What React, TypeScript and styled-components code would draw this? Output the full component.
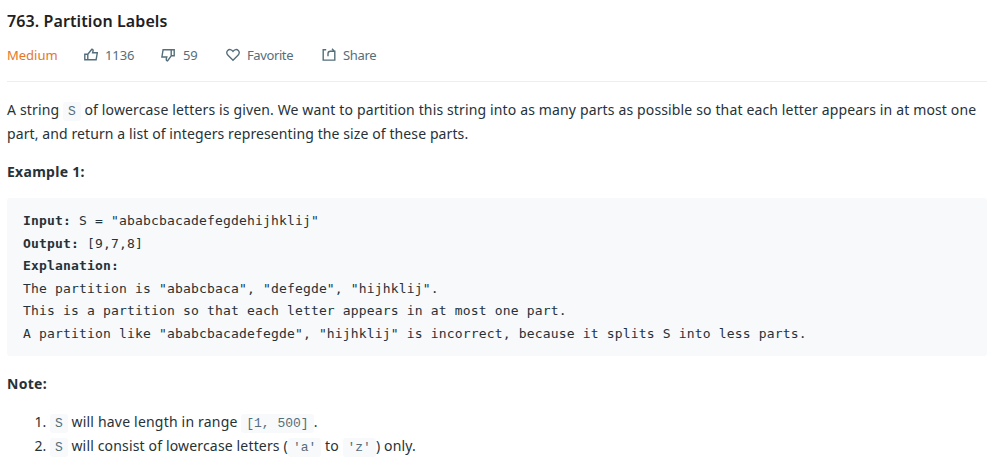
import React from "react";
import styled, { createGlobalStyle } from "styled-components";

const GlobalStyle = createGlobalStyle`
  body {
    margin: 0;
    background: #fff;
    color: #263238;
    font: 14px/24px "Noto Sans", "Open Sans", sans-serif;
    overflow: hidden;
  }
`;

const Page = styled.main`
  padding: 9px 7px 0;
`;

const Title = styled.h1`
  margin: 0;
  font-size: 16px;
  line-height: 24px;
  font-weight: 600;
  color: #212121;
`;

const Meta = styled.div`
  display: grid;
  grid-template-columns: 77px 77px 65px 96px auto;
  align-items: center;
  height: 24px;
  margin-top: 10px;
  padding-bottom: 14px;
  border-bottom: 1px solid #eeeeee;
  font-size: 13px;
  color: #546e7a;
`;

const Difficulty = styled.span`
  color: #e5762a;
`;

const Action = styled.span<{ $gap: number }>`
  display: flex;
  align-items: center;
  gap: ${(p) => p.$gap}px;

  svg {
    flex: none;
    width: 14px;
    height: 14px;
    fill: none;
    stroke: currentColor;
    stroke-width: 1.4;
  }
`;

const Run = styled.span<{ $track?: number }>`
  white-space: nowrap;
  letter-spacing: ${(p) => p.$track ?? 0}px;
`;

const Paragraph = styled.p<{ $top: number }>`
  margin: ${(p) => p.$top}px 0 0;
`;

const Code = styled.code`
  padding: 2px 5px;
  border-radius: 3px;
  background: #f7f9fa;
  color: #546e7a;
  font: 13px/16px "Liberation Mono", monospace;
`;

const Sample = styled.pre`
  box-sizing: border-box;
  height: 158px;
  margin: 14px 0 0;
  padding: 12px 16px 10px;
  border-radius: 3px;
  background: #f7f9fa;
  font: 13px/22.6px "DejaVu Sans Mono", monospace;
  letter-spacing: 0.17px;
`;

const Notes = styled.ol`
  margin: 14px 0 0;
  padding-left: 43px;
`;

const Item = styled.li`
  padding: 0;
`;

export default function App() {
  return (
    <>
      <GlobalStyle />
      <Page>
        <Title><Run $track={0.1}>763. Partition Labels</Run></Title>
        <Meta>
          <Difficulty><Run>Medium</Run></Difficulty>
          <Action $gap={7}>
            <svg viewBox="0 0 14 14">
              <path d="M.8 6.2h3v5.6h-3zM3.8 6.2 7.8 1.2c1.2.2 1.5 1 1.2 2L8.6 4.8h4.7l-1.2 7H3.8" />
            </svg>
            <Run $track={-0.1}>1136</Run>
          </Action>
          <Action $gap={8}>
            <svg viewBox="0 0 14 14">
              <path d="M13.2 1.7h-3v6.1h3zM10.2 7.8l-3.7 5.1c-1.1-.2-1.4-1-1.2-2L5.8 9H.9l1.2-7.3h8.1" />
            </svg>
            <Run $track={-0.2}>59</Run>
          </Action>
          <Action $gap={7}>
            <svg viewBox="0 0 14 14">
              <path d="M7 12.2 2 7.3C.4 5.7.4 3.6 1.7 2.4 3.2 1 5.6 1.4 7 3.4c1.4-2 3.8-2.4 5.3-1C13.6 3.6 13.6 5.7 12 7.3Z" />
            </svg>
            <Run $track={-0.4}>Favorite</Run>
          </Action>
          <Action $gap={7}>
            <svg viewBox="0 0 14 14">
              <path d="M4.2 1.7H1.2v10.4h11.6V3.2H8.4c-1.6 0-2.4.8-2.4 2.2v2.8M10 .8l2.4 2.4" />
            </svg>
            <Run $track={-0.3}>Share</Run>
          </Action>
        </Meta>

        <Paragraph $top={16}>
          <Run $track={0.15}>A string </Run> <Code>S</Code>{" "}
          <Run $track={0.142}>of lowercase letters is given. We want to partition this string into as many parts as possible so that each letter appears in at most one</Run>
          <br />
          <Run $track={0.1}>part, and return a list of integers representing the size of these parts.</Run>
        </Paragraph>
        <Paragraph $top={14}><b><Run $track={0.28}>Example 1:</Run></b></Paragraph>

        <Sample>
          <b>Input:</b>{' S = "ababcbacadefegdehijhklij"\n'}
          <b>Output:</b>{" [9,7,8]\n"}
          <b>Explanation:</b>{"\n"}
          {'The partition is "ababcbaca", "defegde", "hijhklij".\n'}
          {"This is a partition so that each letter appears in at most one part.\n"}
          {'A partition like "ababcbacadefegde", "hijhklij" is incorrect, because it splits S into less parts.'}
        </Sample>

        <Paragraph $top={16}><b><Run $track={0.28}>Note:</Run></b></Paragraph>
        <Notes>
          <Item>
            <Code>S</Code> <Run $track={0.2}>will have length in range</Run> <Code>[1, 500]</Code>.
          </Item>
          <Item>
            <Code>S</Code> <Run $track={0.16}>will consist of lowercase letters (</Run><Code>'a'</Code> <Run $track={0.2}>to</Run>{" "}
            <Code>'z'</Code><Run $track={0.14}>) only.</Run>
          </Item>
        </Notes>
      </Page>
    </>
  );
}
